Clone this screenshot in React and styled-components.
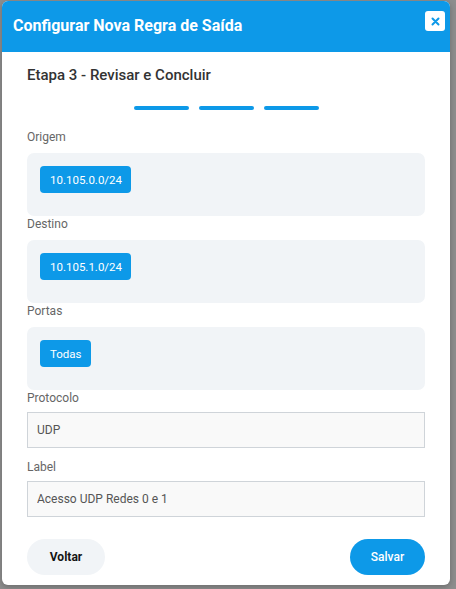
import React from "react";
import styled, { createGlobalStyle } from "styled-components";

const BLUE = "#0d99e8";

const GlobalStyle = createGlobalStyle`
  html, body {
    margin: 0;
    padding: 0;
    background: #8e8e8e;
  }
  body {
    font-family: Roboto, Lato, "Liberation Sans", sans-serif;
    -webkit-font-smoothing: antialiased;
  }
  * { box-sizing: border-box; }
`;

const Backdrop = styled.div`
  min-height: 100vh;
  padding: 1px 0 0 2px;
`;

const Modal = styled.div`
  width: 448px;
  background: #fff;
  border-radius: 6px;
  overflow: hidden;
  box-shadow: 0 2px 6px rgba(0, 0, 0, 0.25);
`;

const Header = styled.div`
  position: relative;
  height: 51px;
  background: ${BLUE};
  display: flex;
  align-items: center;
  padding: 0 40px 2px 11px;
`;

const Title = styled.h2`
  margin: 0;
  color: #fff;
  font-size: 16px;
  font-weight: 700;
`;

const CloseButton = styled.button`
  position: absolute;
  top: 10px;
  right: 5px;
  width: 20px;
  height: 20px;
  border: none;
  border-radius: 3px;
  background: #fff;
  padding: 0;
  display: flex;
  align-items: center;
  justify-content: center;
  cursor: pointer;
`;

const Body = styled.div`
  padding: 0 25px 10px;
`;

const StepTitle = styled.h3`
  margin: 12px 0 0;
  font-size: 15px;
  line-height: 22px;
  font-weight: 500;
  color: #333;
`;

const Progress = styled.div`
  display: flex;
  justify-content: center;
  gap: 10px;
  margin-top: 20px;
`;

const ProgressBar = styled.span`
  width: 55px;
  height: 4px;
  border-radius: 2px;
  background: ${(p) => (p.$done ? BLUE : "#d6dde4")};
`;

const Fields = styled.div`
  margin-top: 19px;
  display: flex;
  flex-direction: column;
`;

const Field = styled.div`
  display: flex;
  flex-direction: column;
  margin-bottom: ${(p) => p.$gap || 0}px;
`;

const FieldLabel = styled.label`
  font-size: 12px;
  line-height: 17px;
  color: #666;
  margin-bottom: ${(p) => p.$space}px;
`;

const TagBox = styled.div`
  height: 63px;
  background: #f1f4f7;
  border-radius: 7px;
  padding: 13px;
  display: flex;
  flex-wrap: wrap;
  align-items: flex-start;
  gap: 6px;
`;

const Tag = styled.span`
  height: 27px;
  padding: 0 9px 0 10px;
  display: inline-flex;
  align-items: center;
  background: ${BLUE};
  color: #fff;
  border-radius: 4px;
  font-size: 11.5px;
`;

const Input = styled.input`
  height: 36px;
  width: 100%;
  border: 1px solid #cfd4d9;
  background: #f9f9f9;
  padding: 0 9px;
  font-family: inherit;
  font-size: 12px;
  color: #555;
  outline: none;
`;

const Actions = styled.div`
  margin-top: 22px;
  display: flex;
  justify-content: space-between;
`;

const Button = styled.button`
  height: 36px;
  border: none;
  border-radius: 18px;
  font-family: inherit;
  font-size: 12px;
  font-weight: ${(p) => (p.$primary ? 500 : 700)};
  cursor: pointer;
  width: ${(p) => p.$width}px;
  background: ${(p) => (p.$primary ? BLUE : "#f1f4f7")};
  color: ${(p) => (p.$primary ? "#fff" : "#151515")};
`;

const tagGroups = [
  { label: "Origem", tags: ["10.105.0.0/24"] },
  { label: "Destino", tags: ["10.105.1.0/24"] },
  { label: "Portas", tags: ["Todas"] },
];

export default function App() {
  return (
    <>
      <GlobalStyle />
      <Backdrop>
        <Modal>
          <Header>
            <Title>Configurar Nova Regra de Saída</Title>
            <CloseButton aria-label="Fechar">
              <svg width="9" height="9" viewBox="0 0 9 9">
                <path d="M1.5 1.5 L7.5 7.5 M7.5 1.5 L1.5 7.5" stroke={BLUE} strokeWidth="2" strokeLinecap="round" />
              </svg>
            </CloseButton>
          </Header>
          <Body>
            <StepTitle>Etapa 3 - Revisar e Concluir</StepTitle>
            <Progress>
              <ProgressBar $done />
              <ProgressBar $done />
              <ProgressBar $done />
            </Progress>
            <Fields>
              {tagGroups.map((g) => (
                <Field key={g.label}>
                  <FieldLabel $space={7}>{g.label}</FieldLabel>
                  <TagBox>
                    {g.tags.map((t) => (
                      <Tag key={t}>{t}</Tag>
                    ))}
                  </TagBox>
                </Field>
              ))}
              <Field $gap={11}>
                <FieldLabel $space={5}>Protocolo</FieldLabel>
                <Input readOnly value="UDP" />
              </Field>
              <Field>
                <FieldLabel $space={5}>Label</FieldLabel>
                <Input readOnly value="Acesso UDP Redes 0 e 1" />
              </Field>
            </Fields>
            <Actions>
              <Button $width={78}>Voltar</Button>
              <Button $primary $width={75}>Salvar</Button>
            </Actions>
          </Body>
        </Modal>
      </Backdrop>
    </>
  );
}
